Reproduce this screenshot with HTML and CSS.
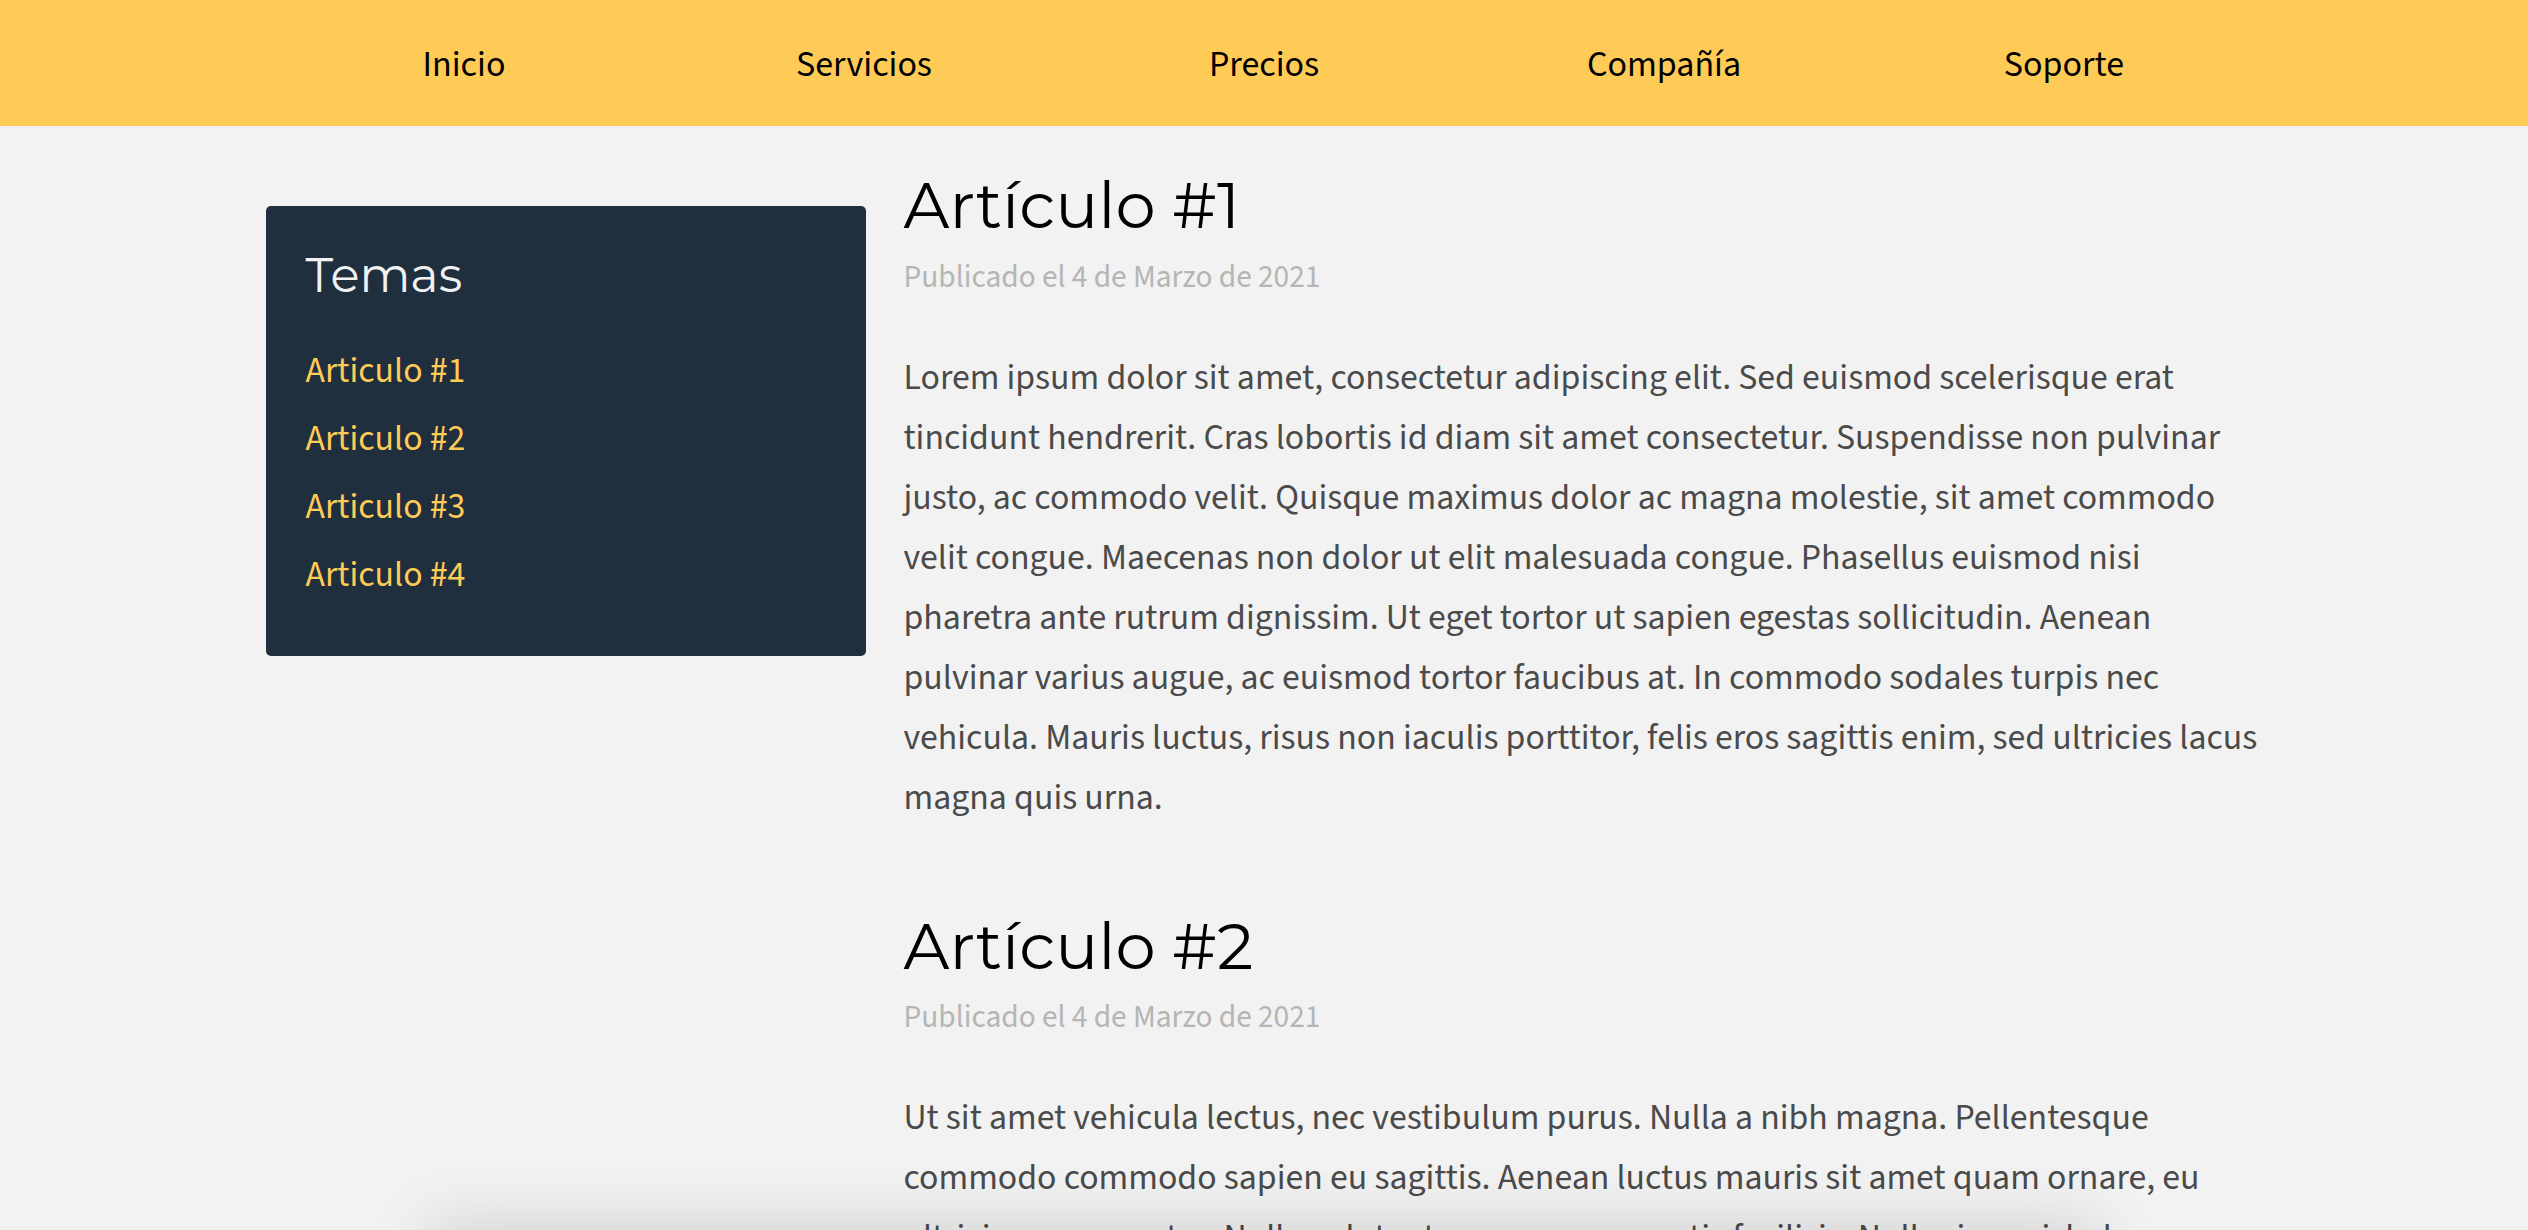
FILE: index.html
```html
<!DOCTYPE html>
<html lang="es">
<head>
<meta charset="utf-8">
<title>Blog</title>
<link rel="stylesheet" href="styles.css">
</head>
<body>
<header class="topbar">
  <nav class="topnav">
    <a class="topnav-link" href="#">Inicio</a>
    <a class="topnav-link" href="#">Servicios</a>
    <a class="topnav-link" href="#">Precios</a>
    <a class="topnav-link" href="#">Compañía</a>
    <a class="topnav-link" href="#">Soporte</a>
  </nav>
</header>

<main class="layout">
  <aside class="sidebar">
    <h2 class="sidebar-title">Temas</h2>
    <ul class="sidebar-list">
      <li><a class="sidebar-link" href="#">Articulo #1</a></li>
      <li><a class="sidebar-link" href="#">Articulo #2</a></li>
      <li><a class="sidebar-link" href="#">Articulo #3</a></li>
      <li><a class="sidebar-link" href="#">Articulo #4</a></li>
    </ul>
  </aside>

  <section class="articles">
    <article class="post">
      <h1 class="post-title">Artículo #1</h1>
      <p class="post-date">Publicado el 4 de Marzo de 2021</p>
      <p class="post-body">Lorem ipsum dolor sit amet, consectetur adipiscing elit. Sed euismod scelerisque erat tincidunt hendrerit. Cras lobortis id diam sit amet consectetur. Suspendisse non pulvinar justo, ac commodo velit. Quisque maximus dolor ac magna molestie, sit amet commodo velit congue. Maecenas non dolor ut elit malesuada congue. Phasellus euismod nisi pharetra ante rutrum dignissim. Ut eget tortor ut sapien egestas sollicitudin. Aenean pulvinar varius augue, ac euismod tortor faucibus at. In commodo sodales turpis nec vehicula. Mauris luctus, risus non iaculis porttitor, felis eros sagittis enim, sed ultricies lacus magna quis urna.</p>
    </article>
    <article class="post">
      <h1 class="post-title">Artículo #2</h1>
      <p class="post-date">Publicado el 4 de Marzo de 2021</p>
      <p class="post-body">Ut sit amet vehicula lectus, nec vestibulum purus. Nulla a nibh magna. Pellentesque commodo commodo sapien eu sagittis. Aenean luctus mauris sit amet quam ornare, eu ultricies nunc auctor. Nulla volutpat purus eu venenatis facilisis. Nulla risus nisl, rhoncus tincidunt pellentesque quis, pulvinar egestas nisi. Donec vitae lorem at ligula posuere vestibulum. Integer sed sem non nunc tempus finibus vitae in tortor.</p>
    </article>
  </section>
</main>

<div class="bottom-shade" aria-hidden="true"></div>
</body>
</html>
```
FILE: styles.css
```css
* {
  box-sizing: border-box;
}

html,
body {
  margin: 0;
  padding: 0;
}

body {
  background: #f2f2f2;
  font-family: "Source Sans 3", "Source Sans Pro", "Lato", sans-serif;
  color: #4a4a4a;
  overflow: hidden;
}

/* ---------- top navigation ---------- */
.topbar {
  background: #ffcb57;
  height: 126px;
  display: flex;
  justify-content: center;
  align-items: center;
  padding-top: 3px;
}

.topnav {
  width: 2000px;
  display: grid;
  grid-template-columns: repeat(5, 1fr);
}

.topnav-link {
  text-align: center;
  font-size: 36px;
  color: #000;
  text-decoration: none;
}

/* ---------- page layout ---------- */
.layout {
  display: grid;
  grid-template-columns: 600px 1365px;
  column-gap: 38px;
  justify-content: center;
  align-items: start;
  padding: 40px 0 0 6px;
}

/* ---------- sidebar ---------- */
.sidebar {
  margin-top: 40px;
  background: #1f2f3e;
  border-radius: 5px;
  padding: 40px 40px 47px;
}

.sidebar-title {
  margin: 0 0 33px;
  font-family: "Montserrat", "Inter", sans-serif;
  font-weight: 400;
  font-size: 48px;
  line-height: normal;
  color: #f2f2f2;
}

.sidebar-list {
  list-style: none;
  margin: 0;
  padding: 0;
}

.sidebar-list li {
  font-size: 35.8px;
  line-height: 68px;
}

.sidebar-link {
  color: #ffcb57;
  text-decoration: none;
}

/* ---------- articles ---------- */
.post + .post {
  margin-top: 79px;
}

.post-title {
  margin: 0;
  font-family: "Montserrat", "Inter", sans-serif;
  font-weight: 400;
  font-size: 64px;
  line-height: normal;
  color: #000;
}

.post-date {
  margin: 10.5px 0 0;
  font-size: 31.4px;
  line-height: normal;
  color: #b5b5b5;
}

.post-body {
  margin: 48px 0 0;
  font-size: 35.8px;
  line-height: 60px;
  color: #4a4a4a;
}

/* ---------- soft shadow peeking in at the bottom edge ---------- */
.bottom-shade {
  position: fixed;
  left: 50%;
  top: 100%;
  width: 1660px;
  height: 80px;
  transform: translateX(-50%);
  background: #e6e6e6;
  box-shadow: 0 0 64px 8px rgba(0, 0, 0, 0.13);
}
```
